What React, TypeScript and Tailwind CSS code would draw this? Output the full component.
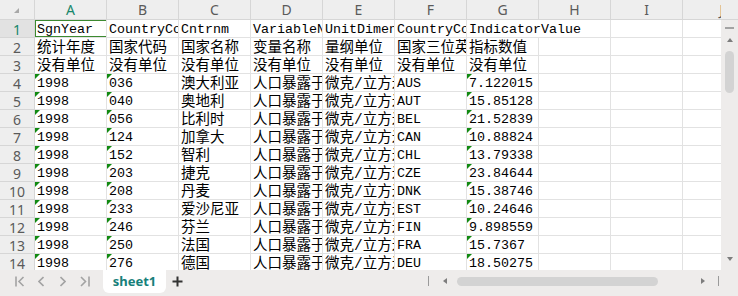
import React from "react";

const COLS = ["A", "B", "C", "D", "E", "F", "G", "H", "I", "J"];

const ROWS: { v: string[]; tri?: boolean }[] = [
  { v: ["SgnYear", "CountryCode", "Cntrnm", "VariableName", "UnitDimension", "CountryCode3", "IndicatorValue"] },
  { v: ["统计年度", "国家代码", "国家名称", "变量名称", "量纲单位", "国家三位英文代码", "指标数值"] },
  { v: ["没有单位", "没有单位", "没有单位", "没有单位", "没有单位", "没有单位", "没有单位"] },
  ...[
    ["036", "澳大利亚", "AUS", "7.122015"],
    ["040", "奥地利", "AUT", "15.85128"],
    ["056", "比利时", "BEL", "21.52839"],
    ["124", "加拿大", "CAN", "10.88824"],
    ["152", "智利", "CHL", "13.79338"],
    ["203", "捷克", "CZE", "23.84644"],
    ["208", "丹麦", "DNK", "15.38746"],
    ["233", "爱沙尼亚", "EST", "10.24646"],
    ["246", "芬兰", "FIN", "9.898559"],
    ["250", "法国", "FRA", "15.7367"],
    ["276", "德国", "DEU", "18.50275"],
  ].map(([code, name, iso, val]) => ({
    v: ["1998", code, name, "人口暴露于PM2.5", "微克/立方米", iso, val],
    tri: true,
  })),
];

const cjk = /[\u3400-\u9fff]/;

function Tri() {
  return <span className="absolute left-0 top-0 w-0 h-0 border-t-[5px] border-r-[5px] border-t-[#118a11] border-r-transparent" />;
}

function Cell({ text, tri, row, col }: { text?: string; tri?: boolean; row: number; col: number }) {
  const overflow = row === 0 && col === 6;
  const isCjk = text ? cjk.test(text) : false;
  return (
    <div
      className={`relative shrink-0 w-[72px] h-[18px] border-b border-[#e2e2e2] whitespace-nowrap pl-[2px] pt-[2px] leading-[16px] text-black ${
        overflow ? "overflow-visible z-10" : "overflow-hidden border-r"
      } ${isCjk ? "text-[14.5px]" : "text-[13.33px]"}`}
      style={{ fontFamily: '"Liberation Mono", "Noto Sans CJK SC", monospace' }}
    >
      {tri && <Tri />}
      {text}
      {row === 0 && col === 0 && (
        <span className="absolute left-[-1px] top-[-1px] w-[74px] h-[19px] border-2 border-[#3c8a30]" />
      )}
    </div>
  );
}

export default function App() {
  return (
    <div className="w-[738px] h-[296px] bg-white overflow-hidden flex flex-col select-none" style={{ fontFamily: '"Noto Sans", sans-serif' }}>
      <div className="flex h-[270px]">
        <div className="w-[721px] overflow-hidden">
          {/* column headers */}
          <div className="flex h-[20px] bg-[#eeeeee]">
            <div className="relative shrink-0 w-[35px] border-r border-b border-[#d6d6d6]">
              <span className="absolute right-[15px] bottom-[6px] w-0 h-0 border-b-[5px] border-l-[5px] border-b-[#a8a8a8] border-l-transparent" />
            </div>
            {COLS.map((c, i) => (
              <div
                key={c}
                className={`shrink-0 w-[72px] border-r border-b border-[#d6d6d6] text-center text-[14px] leading-[20px] ${
                  i === 0 ? "text-[#17876b]" : "text-[#5a5a5a]"
                } ${i === 9 ? "pl-[6px]" : ""}`}
              >
                {c}
              </div>
            ))}
          </div>
          {ROWS.map((r, ri) => (
            <div key={ri} className="flex h-[18px]">
              <div
                className={`shrink-0 w-[35px] border-r border-b border-[#d6d6d6] text-center text-[14px] leading-[17px] pt-[1px] ${
                  ri === 0 ? "bg-[#e2e2e2] text-[#17876b]" : "bg-[#eeeeee] text-[#5a5a5a]"
                }`}
              >
                {ri + 1}
              </div>
              {COLS.map((c, ci) => (
                <Cell key={c} text={r.v[ci]} tri={r.tri && (ci === 0 || ci === 1 || ci === 6)} row={ri} col={ci} />
              ))}
            </div>
          ))}
        </div>
        {/* vertical scrollbar */}
        <div className="w-[17px] flex flex-col">
          <div className="h-[20px] bg-[#eeeeee] border-b border-[#d6d6d6]" />
          <div className="flex-1 bg-[#eeeceb] flex flex-col items-center pt-[7px] pb-[9px]">
            <span className="w-[9px] h-[2px] bg-[#a3a3a3]" />
            <span className="mt-[9px] w-0 h-0 border-l-[3px] border-r-[3px] border-b-[4px] border-l-transparent border-r-transparent border-b-[#7d7d7d]" />
            <span className="mt-[9px] w-[9px] h-[42px] rounded-full bg-[#d3d3d3]" />
            <span className="flex-1" />
            <span className="w-0 h-0 border-l-[3px] border-r-[3px] border-t-[4px] border-l-transparent border-r-transparent border-t-[#7d7d7d]" />
          </div>
        </div>
      </div>
      {/* bottom bar */}
      <div className="h-[26px] bg-[#eeeceb] flex items-start">
        <div className="flex items-center h-[22px] pl-[15px] text-[#a3a3a3]">
          <svg width="10" height="11" viewBox="0 0 10 11" fill="none" stroke="currentColor" strokeWidth="1.6">
            <path d="M1 0.5v10M8.5 1L4 5.5l4.5 4.5" />
          </svg>
          <svg className="ml-[13px]" width="6" height="11" viewBox="0 0 6 11" fill="none" stroke="currentColor" strokeWidth="1.6">
            <path d="M5.5 1L1 5.5l4.5 4.5" />
          </svg>
          <svg className="ml-[16px]" width="6" height="11" viewBox="0 0 6 11" fill="none" stroke="currentColor" strokeWidth="1.6">
            <path d="M0.5 1L5 5.5 0.5 10" />
          </svg>
          <svg className="ml-[14px]" width="10" height="11" viewBox="0 0 10 11" fill="none" stroke="currentColor" strokeWidth="1.6">
            <path d="M1 1l4.5 4.5L1 10M9 0.5v10" />
          </svg>
        </div>
        <div className="ml-[13px] w-[63px] h-[23px] bg-white rounded-b-[6px] flex items-center justify-center text-[13px] font-bold text-[#17807a]">
          sheet1
        </div>
        <div className="ml-[6px] h-[22px] flex items-center">
          <svg width="11" height="11" viewBox="0 0 11 11" stroke="#333" strokeWidth="2">
            <path d="M5.5 0.5v10M0.5 5.5h10" />
          </svg>
        </div>
        <div className="ml-[245px] h-[22px] flex items-center">
          <span className="w-px h-[10px] bg-[#9a9a9a]" />
          <span className="ml-[14px] w-0 h-0 border-t-[3px] border-b-[3px] border-r-[4px] border-t-transparent border-b-transparent border-r-[#7d7d7d]" />
          <span className="ml-[10px] w-[201px] h-[9px] rounded-full bg-[#d3d3d3]" />
          <span className="ml-[43px] w-0 h-0 border-t-[3px] border-b-[3px] border-l-[4px] border-t-transparent border-b-transparent border-l-[#7d7d7d]" />
          <span className="ml-[13px] w-px h-[10px] bg-[#9a9a9a]" />
        </div>
      </div>
    </div>
  );
}
